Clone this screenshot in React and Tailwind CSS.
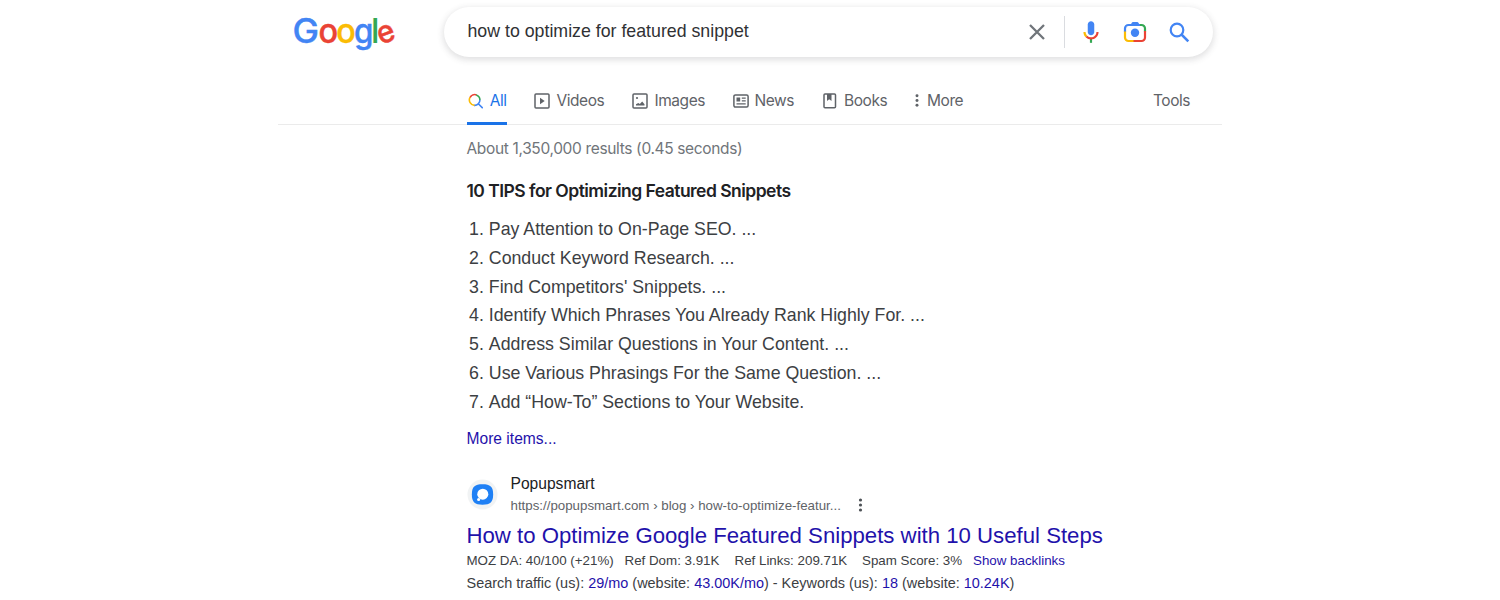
import React from "react";

const TIPS = [
  "Pay Attention to On-Page SEO. ...",
  "Conduct Keyword Research. ...",
  "Find Competitors' Snippets. ...",
  "Identify Which Phrases You Already Rank Highly For. ...",
  "Address Similar Questions in Your Content. ...",
  "Use Various Phrasings For the Same Question. ...",
  "Add “How-To” Sections to Your Website.",
];

function Logo() {
  return (
    <svg width="112" height="56" viewBox="-4 -8 112 56" strokeWidth="0.4" className="shrink-0 overflow-visible font-['Inter',sans-serif] text-[33.5px] font-medium">
      <text x="0.5" y="30.7" fill="#4285f4" stroke="#4285f4" textLength="26.5" lengthAdjust="spacingAndGlyphs">G</text>
      <text x="26.6" y="30.7" fill="#ea4335" stroke="#ea4335" textLength="19.6" lengthAdjust="spacingAndGlyphs">o</text>
      <text x="44.2" y="30.7" fill="#fbbc05" stroke="#fbbc05" textLength="19.6" lengthAdjust="spacingAndGlyphs">o</text>
      <text x="62" y="30.7" fill="#4285f4" stroke="#4285f4" textLength="19.4" lengthAdjust="spacingAndGlyphs">g</text>
      <text x="79" y="30.7" fill="#34a853">l</text>
      <text x="85.4" y="30.3" fill="#ea4335" stroke="#ea4335" fontSize="31" className="text-[31px]" transform="rotate(-20 94 22)" textLength="17.4" lengthAdjust="spacingAndGlyphs">e</text>
    </svg>
  );
}

function CloseIcon() {
  return (
    <svg width="16" height="16" viewBox="0 0 16 16" fill="none" stroke="#70757a" strokeWidth="2.3">
      <path d="M1 1l14 14M15 1L1 15" />
    </svg>
  );
}

function MicIcon() {
  return (
    <svg width="26" height="26" viewBox="0 0 24 24">
      <path fill="#4285f4" d="M12 15c1.66 0 3-1.31 3-2.97V4.97C15 3.31 13.66 2 12 2S9 3.31 9 4.97v7.06C9 13.69 10.34 15 12 15z" />
      <path fill="#34a853" d="M11 18.08h2V22h-2z" />
      <path fill="#fbbc04" d="M7.05 16.87C5.78 15.62 5 13.93 5 12h2c0 1.45.56 2.42 1.47 3.38z" />
      <path fill="#ea4335" d="M12 16.93a4.97 4.97 0 0 1-3.54-1.55l-1.41 1.49A7 7 0 0 0 12 18.92c3.87 0 6.99-2.92 6.99-6.92h-2c0 2.92-2.24 4.93-4.99 4.93z" />
    </svg>
  );
}

function LensIcon() {
  return (
    <svg width="24" height="24" viewBox="0 0 24 24" fill="none" strokeWidth="2.2">
      <path stroke="#4285f4" d="M2 12V8.5A3.5 3.5 0 0 1 5.5 5H17.5" />
      <path stroke="#34a853" d="M17 5h1.5A3.5 3.5 0 0 1 22 8.5V11.5" />
      <path stroke="#ea4335" d="M22 11V17.5A3.5 3.5 0 0 1 18.5 21H10" />
      <path stroke="#fbbc04" d="M2 11.5V17.5A3.5 3.5 0 0 0 5.5 21H10.5" />
      <path fill="#4285f4" d="M7.5 5L8.8 2.8Q9.1 2 10 2h4.2q.9 0 1.2.8L16.7 5z" />
      <circle cx="12" cy="12.8" r="4.2" fill="#4285f4" />
    </svg>
  );
}

function SearchIcon() {
  return (
    <svg width="21" height="21" viewBox="0 0 21 21" fill="none" stroke="#4285f4" strokeWidth="2.2">
      <circle cx="8" cy="8" r="6.3" />
      <path strokeWidth="2.5" d="M12.5 12.5l6.8 6.8" />
    </svg>
  );
}

function AllIcon() {
  return (
    <svg width="16" height="16" viewBox="0 0 15 15" fill="none" strokeWidth="1.6">
      <path stroke="#ea4335" d="M1.9 4.2A5.3 5.3 0 0 1 8.6 1.6" />
      <path stroke="#34a853" d="M8.2 1.5A5.3 5.3 0 0 1 11.8 6.5" />
      <path stroke="#4285f4" d="M11.8 6.3A5.3 5.3 0 0 1 6 11.8M10.2 10.2L14.6 14.6" />
      <path stroke="#fbbc04" d="M2 4A5.3 5.3 0 0 0 6.5 11.8" />
    </svg>
  );
}

function VideoIcon() {
  return (
    <svg width="16" height="16" viewBox="0 0 16 16">
      <rect x="1" y="1" width="14" height="14" rx="1" fill="none" stroke="#5f6368" strokeWidth="1.5" />
      <path fill="#5f6368" d="M6 4.7L10.7 8 6 11.3z" />
    </svg>
  );
}

function ImageIcon() {
  return (
    <svg width="16" height="16" viewBox="0 0 16 16">
      <rect x="1" y="1" width="14" height="14" rx="1" fill="none" stroke="#5f6368" strokeWidth="1.5" />
      <path fill="#5f6368" d="M4 12.5v-1.2L6.3 10l1.5 1 2.4-2.5L12.5 11.3v1.2z" />
      <circle cx="5" cy="5" r="1.1" fill="#5f6368" />
    </svg>
  );
}

function NewsIcon() {
  return (
    <svg width="16" height="14" viewBox="0 0 16 14">
      <rect x=".9" y=".9" width="14.2" height="12.2" rx="1.5" fill="none" stroke="#5f6368" strokeWidth="1.5" />
      <path fill="#5f6368" d="M3.5 3.5h3.7v4H3.5zM8.8 3.5h3.9v1.3H8.8zM8.8 6.2h3.9v1.3H8.8zM3.5 9.3h9.2v1.3H3.5z" />
    </svg>
  );
}

function BookIcon() {
  return (
    <svg width="14" height="16" viewBox="0 0 14 16">
      <rect x="1" y="1" width="11.5" height="13.8" rx="1" fill="none" stroke="#5f6368" strokeWidth="1.5" />
      <path fill="#5f6368" d="M4 1h4.5v7L6.2 6.3 4 8z" />
    </svg>
  );
}

function Dots({ className }) {
  return (
    <svg viewBox="0 0 4 14" className={className} fill="currentColor">
      <circle cx="2" cy="2" r="1.6" />
      <circle cx="2" cy="7" r="1.6" />
      <circle cx="2" cy="12" r="1.6" />
    </svg>
  );
}

function PopupsmartIcon() {
  return (
    <svg width="31" height="31" viewBox="0 0 32 32">
      <circle cx="16" cy="16" r="15.5" fill="#f1f3f4" />
      <path fill="#1f80f5" d="M16 5.5C24 5.5 27 8 27 16S24 26.5 16 26.5 5 24 5 16 8 5.5 16 5.5z" />
      <circle cx="16.3" cy="15.7" r="5.7" fill="#fff" />
      <circle cx="12" cy="21.2" r="1.6" fill="#fff" />
    </svg>
  );
}

function Tab({ icon, label, className }) {
  return (
    <div className={"flex items-center whitespace-nowrap " + className}>
      {icon}
      <span>{label}</span>
    </div>
  );
}

export default function App() {
  return (
    <div className="h-[600px] w-[1500px] overflow-hidden bg-white pl-[278px] font-['Liberation_Sans',Arial,sans-serif] text-[#3c4043]">
      <header className="flex h-[76px] items-start pl-[10px] pt-[7px]">
        <div className="-mt-[3px]"><Logo /></div>
        <div className="ml-[44px] flex h-[50px] w-[769px] items-center rounded-full bg-white pl-[23.5px] shadow-[0_2px_6px_1px_rgba(64,60,67,0.16)]">
          <span className="w-[561.5px] whitespace-nowrap pb-[2px] text-[17.75px] leading-6 text-[#303134]">how to optimize for featured snippet</span>
          <CloseIcon />
          <span className="ml-[19px] h-8 w-px bg-[#dadce0]" />
          <span className="ml-[13px]"><MicIcon /></span>
          <span className="ml-[19px]"><LensIcon /></span>
          <span className="ml-[21.5px]"><SearchIcon /></span>
        </div>
      </header>

      <nav className="flex h-[49px] w-[944px] items-stretch border-b border-[#ebebeb] pl-[188.5px] font-['Inter',sans-serif] text-[15.5px] tracking-[-0.45px] text-[#5f6368]">
        <Tab className="-mb-px mr-[27px] w-[40px] gap-[7px] border-b-[3px] border-[#1a73e8] pl-[1px] pt-[3px] text-[#1a73e8]" icon={<AllIcon />} label="All" />
        <Tab className="w-[98px] gap-[7px] pt-px" icon={<VideoIcon />} label="Videos" />
        <Tab className="w-[101px] gap-[7px] pt-px" icon={<ImageIcon />} label="Images" />
        <Tab className="w-[90px] gap-[6px] pt-px" icon={<NewsIcon />} label="News" />
        <Tab className="w-[92px] gap-[7.5px] pt-px" icon={<BookIcon />} label="Books" />
        <Tab className="w-[238.5px] gap-[8.5px] pt-px" icon={<Dots className="h-[13px] w-[4px]" />} label="More" />
        <Tab className="pt-px" label="Tools" />
      </nav>

      <main className="pl-[188.5px]">
        <p className="mt-[12px] font-['Inter',sans-serif] text-[15.5px] leading-6 tracking-[-0.35px] text-[#70757a]">About 1,350,000 results (0.45 seconds)</p>
        <h2 className="mt-[18px] font-['Inter',sans-serif] text-[17.5px] font-semibold leading-6 tracking-[-0.53px] text-[#202124]">10 TIPS for Optimizing Featured Snippets</h2>
        <ol className="mt-[12px] pl-[2.5px] text-[17.75px] leading-[28.8px]">
          {TIPS.map((tip, i) => (
            <li key={tip} className="flex gap-[5px]">
              <span>{i + 1}.</span>
              <span>{tip}</span>
            </li>
          ))}
        </ol>
        <a className="mt-[10px] block text-[15.6px] leading-6 text-[#1f12ab]">More items...</a>

        <div className="mt-[22px] flex h-[43px] items-center">
          <PopupsmartIcon />
          <div className="ml-[13px] w-[347.5px] whitespace-nowrap">
            <div className="text-[15.6px] leading-[22px] text-[#202124]">Popupsmart</div>
            <div className="text-[13.3px] leading-[21px] text-[#5f6368]">https://popupsmart.com › blog › how-to-optimize-featur...</div>
          </div>
          <Dots className="mt-[22px] h-[14px] w-[5px] text-[#4d5156]" />
        </div>
        <h3 className="mt-[6px] whitespace-nowrap text-[22.2px] leading-[28px] text-[#1f12ab]">How to Optimize Google Featured Snippets with 10 Useful Steps</h3>
        <div className="flex whitespace-nowrap text-[13.35px] leading-[22px]">
          <span className="w-[158px]">MOZ DA: 40/100 (+21%)</span>
          <span className="w-[110px]">Ref Dom: 3.91K</span>
          <span className="w-[127.5px]">Ref Links: 209.71K</span>
          <span className="w-[111px]">Spam Score: 3%</span>
          <a className="text-[#1f12ab]">Show backlinks</a>
        </div>
        <p className="whitespace-nowrap text-[14.44px] leading-[23px]">
          Search traffic (us): <a className="text-[#1f12ab]">29/mo</a> (website: <a className="text-[#1f12ab]">43.00K/mo</a>) - Keywords (us): <a className="text-[#1f12ab]">18</a> (website: <a className="text-[#1f12ab]">10.24K</a>)
        </p>
      </main>
    </div>
  );
}
